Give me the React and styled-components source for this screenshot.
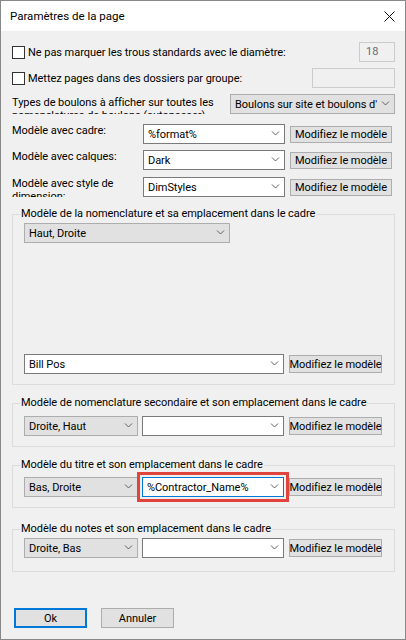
import styled, { createGlobalStyle } from "styled-components";

const GlobalStyle = createGlobalStyle`
  html, body { margin: 0; padding: 0; background: #fff; }
  body {
    font-family: Roboto, "Liberation Sans", sans-serif;
    font-size: 11px;
    letter-spacing: -0.05px;
    color: #000;
  }
  * { box-sizing: border-box; }
`;

const Window = styled.div`
  width: 406px;
  height: 640px;
  border: 1px solid #888;
  background: #f0f0f0;
  display: flex;
  flex-direction: column;
`;

const TitleBar = styled.div`
  height: 30px;
  background: #fff;
  display: flex;
  align-items: center;
  justify-content: space-between;
  padding: 0 10px 0 9px;
  font-size: 11.5px;
  letter-spacing: 0;
`;

const Body = styled.div`
  display: flex;
  flex-direction: column;
  padding: 11px 10px 0 11px;
`;

const CheckRow = styled.div`
  display: flex;
  align-items: center;
  height: 20px;
  margin-top: ${(p) => p.$mt || 0}px;
`;

const Box = styled.span`
  width: 13px;
  height: 13px;
  border: 1px solid #333;
  background: #fff;
  margin-right: 3px;
  flex: none;
`;

const CheckLabel = styled.span`
  flex: 1;
  white-space: nowrap;
`;

const SmallInput = styled.div`
  width: ${(p) => p.$w}px;
  height: 20px;
  border: 1px solid #ccc;
  background: #f0f0f0;
  color: #6d6d6d;
  padding-left: 6px;
  line-height: 18px;
`;

const FieldRow = styled.div`
  display: flex;
  align-items: flex-start;
  height: ${(p) => p.$h || 20}px;
  margin-top: ${(p) => p.$mt || 0}px;
`;

const FieldLabel = styled.div`
  width: ${(p) => p.$w || 131}px;
  height: 20px;
  line-height: 13px;
  padding-top: ${(p) => p.$pt || 0}px;
  padding-right: 4px;
  overflow: hidden;
  flex: none;
`;

const Select = styled.div`
  width: ${(p) => p.$w}px;
  height: 20px;
  flex: none;
  display: flex;
  align-items: center;
  padding-left: 4px;
  border: 1px solid
    ${(p) => (p.$focus ? "#0078d7" : p.$grey ? "#adadad" : "#7a7a7a")};
  background: ${(p) => (p.$grey ? "#e1e1e1" : "#fff")};
  margin-right: ${(p) => p.$mr || 0}px;
  ${(p) => p.$mark && "outline: 3px solid #e0443c; outline-offset: 2px;"}
`;

const SelectText = styled.span`
  flex: 1;
  overflow: hidden;
  white-space: nowrap;
`;

const Chevron = styled.svg`
  flex: none;
  width: 17px;
  height: 6px;
`;

const Button = styled.div`
  width: ${(p) => p.$w}px;
  height: ${(p) => p.$h}px;
  flex: none;
  align-self: center;
  margin-left: 5px;
  background: #e1e1e1;
  border: 1px solid #adadad;
  display: flex;
  align-items: center;
  justify-content: center;
  white-space: nowrap;
`;

const Group = styled.fieldset`
  margin: ${(p) => p.$mt}px 0 0 0;
  padding: ${(p) => p.$pt}px 10px 0 11px;
  border: 1px solid #dcdcdc;
  min-inline-size: 0;
  height: ${(p) => p.$h}px;
`;

const Legend = styled.legend`
  padding: 0 1px;
  margin-left: -4px;
  line-height: 14px;
  white-space: nowrap;
`;

const GroupRow = styled.div`
  display: flex;
  align-items: center;
  height: 20px;
  margin-top: ${(p) => p.$mt || 0}px;
`;

const Footer = styled.div`
  display: flex;
  gap: 14px;
  margin-top: 36px;
  padding-left: 2px;
`;

const DialogButton = styled.div`
  width: 73px;
  height: 20px;
  display: flex;
  align-items: center;
  justify-content: center;
  background: #e1e1e1;
  border: ${(p) => (p.$primary ? "2px solid #0078d7" : "1px solid #adadad")};
`;

function Combo({ text, w, grey, focus, mark, mr }) {
  return (
    <Select $w={w} $grey={grey} $focus={focus} $mark={mark} $mr={mr}>
      <SelectText>{text}</SelectText>
      <Chevron viewBox="0 0 17 6">
        <path d="M5 0.5 L8.5 4 L12 0.5" fill="none" stroke="#606060" strokeWidth="1" />
      </Chevron>
    </Select>
  );
}

const MODIFY = "Modifiez le modèle";

function PlaceRow({ pos, tpl, mark, focus }) {
  return (
    <GroupRow>
      <Combo text={pos} w={114} grey mr={4} />
      <Combo text={tpl} w={142} mark={mark} focus={focus} />
      <Button $w={93} $h={18}>{MODIFY}</Button>
    </GroupRow>
  );
}

export default function App() {
  return (
    <>
      <GlobalStyle />
      <Window>
        <TitleBar>
          <span>Paramètres de la page</span>
          <svg width="11" height="11" viewBox="0 0 11 11">
            <path d="M0.5 0.5 L10.5 10.5 M10.5 0.5 L0.5 10.5" stroke="#111" strokeWidth="1" />
          </svg>
        </TitleBar>
        <Body>
          <CheckRow>
            <Box />
            <CheckLabel>Ne pas marquer les trous standards avec le diamètre:</CheckLabel>
            <SmallInput $w={36}>18</SmallInput>
          </CheckRow>
          <CheckRow $mt={6}>
            <Box />
            <CheckLabel>Mettez pages dans des dossiers par groupe:</CheckLabel>
            <SmallInput $w={83} />
          </CheckRow>
          <FieldRow $mt={6} $h={21}>
            <FieldLabel $w={218} $pt={2}>
              Types de boulons à afficher sur toutes les nomenclatures de boulons (autopasser)
            </FieldLabel>
            <Combo text="Boulons sur site et boulons d'atelier" w={165} grey />
          </FieldRow>
          <FieldRow $mt={9}>
            <FieldLabel>Modèle avec cadre:</FieldLabel>
            <Combo text="%format%" w={142} />
            <Button $w={102} $h={17}>{MODIFY}</Button>
          </FieldRow>
          <FieldRow $mt={6}>
            <FieldLabel>Modèle avec calques:</FieldLabel>
            <Combo text="Dark" w={142} />
            <Button $w={102} $h={17}>{MODIFY}</Button>
          </FieldRow>
          <FieldRow $mt={7}>
            <FieldLabel>Modèle avec style de dimension:</FieldLabel>
            <Combo text="DimStyles" w={142} />
            <Button $w={102} $h={17}>{MODIFY}</Button>
          </FieldRow>

          <Group $mt={10} $pt={2} $h={178}>
            <Legend>Modèle de la nomenclature et sa emplacement dans le cadre</Legend>
            <GroupRow>
              <Combo text="Haut, Droite" w={206} grey />
            </GroupRow>
            <GroupRow $mt={111}>
              <Combo text="Bill Pos" w={260} />
              <Button $w={93} $h={18}>{MODIFY}</Button>
            </GroupRow>
          </Group>

          <Group $mt={11} $pt={6} $h={51}>
            <Legend>Modèle de nomenclature secondaire et son emplacement dans le cadre</Legend>
            <PlaceRow pos="Droite, Haut" tpl="" />
          </Group>

          <Group $mt={11} $pt={5} $h={50}>
            <Legend>Modèle du titre et son emplacement dans le cadre</Legend>
            <PlaceRow pos="Bas, Droite" tpl="%Contractor_Name%" mark focus />
          </Group>

          <Group $mt={14} $pt={2} $h={50}>
            <Legend>Modèle du notes et son emplacement dans le cadre</Legend>
            <PlaceRow pos="Droite, Bas" tpl="" />
          </Group>

          <Footer>
            <DialogButton $primary>Ok</DialogButton>
            <DialogButton>Annuler</DialogButton>
          </Footer>
        </Body>
      </Window>
    </>
  );
}
